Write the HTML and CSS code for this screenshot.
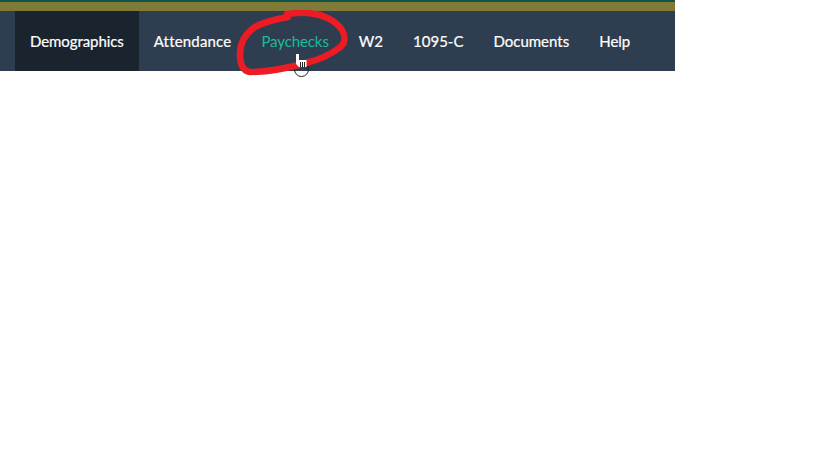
FILE: index.html
```html
<!DOCTYPE html>
<html lang="en">
<head>
  <meta charset="UTF-8" />
  <title>Employee portal</title>
  <link rel="stylesheet" href="styles.css">
</head>
<body>
  <div class="header">
    <div class="top-line"></div>
    <div class="top-band"></div>

    <!-- Menu -->
    <nav class="menu">
      <a href="#" class="menu-item active">Demographics</a>
      <a href="#" class="menu-item wide">Attendance</a>
      <a href="#" class="menu-item hover">Paychecks</a>
      <a href="#" class="menu-item">W2</a>
      <a href="#" class="menu-item">1095-C</a>
      <a href="#" class="menu-item">Documents</a>
      <a href="#" class="menu-item">Help</a>
    </nav>

    <!-- Cursor ring, sits under the marker -->
    <div class="cursor-ring"></div>

    <!-- Red marker scribble -->
    <svg class="scribble" width="114" height="66" viewBox="0 0 114 66">
      <path d="M51 4 C60 3 68 2 76 3.5 C88 5 100 11 106 20 C110 27 109 34 103 38 C94 45 82 50 70 53 C52 58 30 62 14 62 C7 61 4 54 4 44 C4 32 9 24 19 17 C28 12 40 9 52 7" fill="none" stroke="#ed1c24" stroke-width="6.5" stroke-linecap="round" stroke-linejoin="round"/>
    </svg>

    <!-- Hand cursor -->
    <svg class="cursor-hand" width="13" height="15" viewBox="0 0 13 15">
      <path d="M1 0 H4 V6 H11.5 V13 H4 L1 10 Z" fill="#fff"/>
      <path d="M5.5 8 V13 M7.5 8 V13 M9.5 8 V13" stroke="#222" stroke-width="1"/>
    </svg>
  </div>
</body>
</html>
```

FILE: styles.css
```css
body {
  margin: 0;
  background-color: #fff;
  font-family: Lato, "Open Sans", sans-serif;
}
.header {
  position: relative;
  width: 675px;
  height: 100px;
}
.top-line {
  height: 2px;
  background-color: #0f5449;
}
.top-band {
  height: 9px;
  background-color: #7f7a38;
}

/* Menu */
.menu {
  display: flex;
  height: 60px;
  padding-left: 15px;
  background-color: #2e3e50;
}
.menu-item {
  display: flex;
  align-items: center;
  padding: 0 15px;
  color: #fff;
  font-size: 15px;
  text-decoration: none;
  -webkit-text-stroke: 0.2px;
}
.menu-item.active {
  background-color: #1a242f;
  letter-spacing: -0.08px;
}
.menu-item.wide {
  letter-spacing: 0.18px;
}
.menu-item.hover {
  color: #18bc9c;
  letter-spacing: -0.1px;
  -webkit-text-stroke: 0;
}

.scribble {
  position: absolute;
  left: 236px;
  top: 10px;
}
.cursor-ring {
  position: absolute;
  left: 294px;
  top: 62px;
  width: 13px;
  height: 13px;
  border: 1px solid #222;
  border-radius: 50%;
}
.cursor-hand {
  position: absolute;
  left: 295px;
  top: 54px;
}
```
